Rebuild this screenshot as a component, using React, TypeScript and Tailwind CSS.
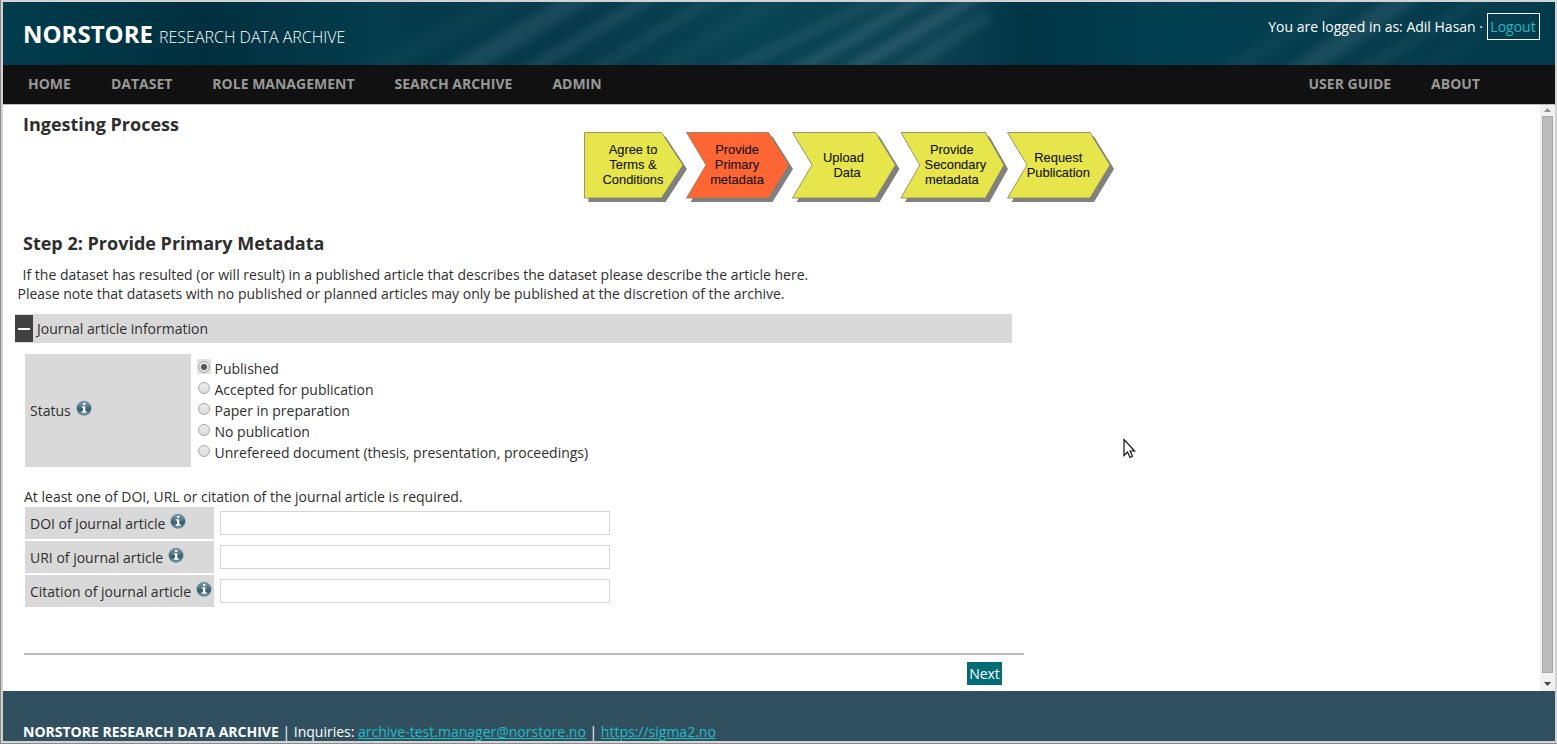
import React from "react";

const statuses = [
  "Published",
  "Accepted for publication",
  "Paper in preparation",
  "No publication",
  "Unrefereed document (thesis, presentation, proceedings)",
];

const streaks: { d: string; w: number; o: number }[] = [
  { d: "M330 90 L560 -30", w: 16, o: 0.05 },
  { d: "M420 90 L620 -30", w: 20, o: 0.12 },
  { d: "M490 90 L690 -30", w: 11, o: 0.13 },
  { d: "M555 90 L755 -30", w: 9, o: 0.1 },
  { d: "M620 90 L820 -30", w: 16, o: 0.05 },
  { d: "M680 90 L935 -30", w: 10, o: 0.11 },
  { d: "M757 90 L965 -30", w: 11, o: 0.17 },
  { d: "M810 90 L1015 -30", w: 12, o: 0.19 },
  { d: "M868 90 L985 12", w: 14, o: 0.11 },
  { d: "M1190 90 L1385 -30", w: 14, o: 0.06 },
  { d: "M1267 90 L1440 -30", w: 20, o: 0.13 },
  { d: "M1325 90 L1520 -30", w: 10, o: 0.08 },
  { d: "M1390 90 L1570 -30", w: 10, o: 0.04 },
];

const steps = [
  { shape: "0.5,0.5 77.5,0.5 99,33 77.5,66 0.5,66", x: 49, fill: "#e6e64c", lines: ["Agree to", "Terms &", "Conditions"] },
  { shape: "102.5,0.5 184.5,0.5 205,33 184.5,66 102.5,66 122,33", x: 153, fill: "#ff6633", lines: ["Provide", "Primary", "metadata"] },
  { shape: "208.5,0.5 291.5,0.5 311.5,33 291.5,66 208.5,66 228,33", x: 259.5, fill: "#e6e64c", lines: ["Upload", "  Data"] },
  { shape: "317,0.5 401.5,0.5 420,33 401.5,66 317,66 335.7,33", x: 367.8, fill: "#e6e64c", lines: ["Provide", "  Secondary", "metadata"] },
  { shape: "423.5,0.5 506,0.5 526,33 506,66 423.5,66 443,33", x: 474.3, fill: "#e6e64c", lines: ["Request", "Publication"] },
];

function InfoIcon() {
  return (
    <svg width="16" height="16" viewBox="0 0 16 16" className="shrink-0">
      <defs>
        <linearGradient id="info" x1="0" y1="0" x2="0" y2="1">
          <stop offset="0" stopColor="#7e9eac" />
          <stop offset="0.45" stopColor="#4a7083" />
          <stop offset="0.6" stopColor="#335b6d" />
          <stop offset="1" stopColor="#76a0aa" />
        </linearGradient>
      </defs>
      <circle cx="8" cy="8.300" r="7.200" fill="url(#info)" stroke="#56798a" strokeWidth="0.400" />
      <path d="M7 3h2.300v2.100H7zM5.800 6.200h3.500v5.100h1.300v1.400H5.700v-1.400H7V7.500H5.800z" fill="#fff" />
    </svg>
  );
}

function Steps() {
  return (
    <svg width="532" height="72" viewBox="0 0 532 72" className="shrink-0">
      {steps.map((s) => (
        <g key={s.x}>
          <polygon points={s.shape} fill="#808080" transform="translate(4 4)" />
          <polygon points={s.shape} fill={s.fill} stroke="#808060" strokeWidth="0.8" />
          {s.lines.map((line, i) => (
            <text
              key={line}
              x={s.x}
              y={(s.lines.length === 3 ? 22 : 29.8) + i * 15}
              textAnchor="middle"
              fontSize="12.9"
              fill="#111"
              stroke="#111"
              strokeWidth="0.1"
              className="whitespace-pre font-['Liberation_Sans',sans-serif]"
            >
              {line}
            </text>
          ))}
        </g>
      ))}
    </svg>
  );
}

function Field({ label }: { label: string }) {
  return (
    <div className="flex h-8">
      <label className="flex w-[189px] gap-[5px] bg-[#d9d9d9] pt-[7px] pl-[5px] leading-[19px] whitespace-nowrap">
        {label}
        <span className="-mt-[1px]"><InfoIcon /></span>
      </label>
      <input className="mt-1 ml-[6px] h-6 w-[390px] border border-[#d6d6d6] bg-white outline-none" />
    </div>
  );
}

export default function App() {
  return (
    <div className="relative flex h-[744px] w-[1557px] flex-col overflow-hidden border-b border-l border-[#8c8886] bg-white font-['Open_Sans',sans-serif] text-[14px] leading-[19px] text-[#2e2e2e]">
      <div className="flex h-[743px] flex-col border-2 border-[#d3d3d3]">
        <header className="relative h-[63px] shrink-0 overflow-hidden bg-[linear-gradient(90deg,#003c4d_0%,#00303f_13%,#033c4d_24%,#06394a_36%,#084354_48%,#0b4253_60%,#003546_66%,#003f50_75%,#063c4d_88%,#003a4b_100%)]">
          <svg className="absolute inset-0" width="1552" height="63">
            <defs>
              <filter id="soft" filterUnits="userSpaceOnUse" x="0" y="-60" width="1552" height="180">
                <feGaussianBlur stdDeviation="5" />
              </filter>
            </defs>
            <g filter="url(#soft)">
              {streaks.map((s) => (
                <path key={s.d} d={s.d} stroke="#a3bcc4" strokeWidth={s.w} strokeOpacity={s.o} />
              ))}
            </g>
          </svg>
          <div className="relative flex justify-between pr-[15px] pl-5">
            <div className="flex items-baseline pt-[15px] text-white">
              <b className="text-[24px] leading-[33px]">NORSTORE</b>
              <span className="ml-[6px] text-[16px] font-light">RESEARCH DATA ARCHIVE</span>
            </div>
            <div className="flex pt-[11px] text-white">
              <span className="pt-1">You are logged in as: Adil Hasan ·</span>
              <a className="ml-[4px] h-[27px] w-[53px] border border-white pt-[3px] pr-px text-center text-[#22bcc4]">Logout</a>
            </div>
          </div>
        </header>
        <nav className="flex h-[39px] shrink-0 items-start justify-between bg-[#111] pt-[9px] pr-[75px] pl-[25px] font-bold text-[#999]">
          <div className="flex gap-10">
            <a>HOME</a><a>DATASET</a><a>ROLE MANAGEMENT</a><a>SEARCH ARCHIVE</a><a>ADMIN</a>
          </div>
          <div className="flex gap-10"><a>USER GUIDE</a><a>ABOUT</a></div>
        </nav>
        <div className="flex h-[587px] shrink-0 border-t border-[#bdbdbd]">
          <main className="flex w-[1537px] flex-col">
            <div className="flex h-[126px]">
              <h1 className="w-[561px] pt-[7px] pl-5 text-[18px] leading-6 font-bold">Ingesting Process</h1>
              <div className="ml-[20px] pt-[27px]"><Steps /></div>
            </div>
            <h2 className="pl-5 text-[18px] leading-6 font-bold">Step 2: Provide Primary Metadata</h2>
            <p className="mt-[10px] pl-[19.6px]">If the dataset has resulted (or will result) in a published article that describes the dataset please describe the article here.</p>
            <p className="pl-[14.5px]">Please note that datasets with no published or planned articles may only be published at the discretion of the archive.</p>
            <div className="mt-[11px] ml-3 flex h-[29px] w-[997px] items-center bg-[#d9d9d9]">
              <span className="flex h-[27px] w-[18px] items-center justify-center bg-[#404040]"><i className="h-[2px] w-3 bg-white" /></span>
              <span className="ml-[4px]">Journal article information</span>
            </div>
            <div className="mt-[11px] ml-[22px] flex h-[113px]">
              <div className="flex w-[166px] gap-[5px] bg-[#d9d9d9] pt-[46px] pl-[5px]">
                <span className="pt-px">Status</span><InfoIcon />
              </div>
              <div className="pt-[5px] pl-[6px]">
                {statuses.map((s, i) => (
                  <label key={s} className="flex h-[21px]">
                    <span className={`flex h-[15px] w-[14px] items-center justify-center rounded-[2px] ${i === 0 ? "bg-[#e2e2e2]" : ""}`}>
                      <span className="flex size-3 items-center justify-center rounded-full border border-[#a8a8a8] bg-linear-to-b from-[#ededed] to-[#dcdcdc]">
                        {i === 0 && <span className="size-[6px] rounded-full bg-[#555]" />}
                      </span>
                    </span>
                    <span className="ml-[3.5px]">{s}</span>
                  </label>
                ))}
              </div>
            </div>
            <p className="mt-5 ml-[21px] h-5">At least one of DOI, URL or citation of the journal article is required.</p>
            <div className="ml-[22px] flex flex-col gap-[2px]">
              <Field label="DOI of journal article" />
              <Field label="URI of journal article" />
              <Field label="Citation of journal article" />
            </div>
            <div className="mt-[46px] ml-[21px] flex h-8 w-[1000px] justify-end border-t-2 border-[#bcbcbc] pr-[22px]">
              <button className="mt-[7px] h-[23px] w-[35px] bg-[#006d78] text-center text-white">Next</button>
            </div>
          </main>
          <div className="flex w-[15px] flex-col items-center justify-between bg-[#f1f1f1]">
            <svg width="15" height="11"><path d="M4 7h7L7.5 3z" fill="#909090" /></svg>
            <div className="w-[11px] flex-1 border border-[#a8a8a8] bg-[#bcbcbc]" />
            <svg width="15" height="18"><path d="M4 9h7l-3.500 4z" fill="#444" /></svg>
          </div>
        </div>
        <footer className="flex-1 bg-[#305060] pt-[31px] pl-5 text-white">
          <b>NORSTORE RESEARCH DATA ARCHIVE</b> | Inquiries: <a className="text-[#22bcc4] underline">archive-test.manager@norstore.no</a> | <a className="text-[#22bcc4] underline">https://sigma2.no</a>
        </footer>
      </div>
      <svg className="absolute top-[438px] left-[1121px]" width="14" height="22" viewBox="0 0 14 22">
        <path d="M2 1.500v16l3.500-3.500 2.500 5.500 2.500-1.200-2.400-5.300h4.500z" fill="#fff" stroke="#111" strokeWidth="1.200" />
      </svg>
    </div>
  );
}
